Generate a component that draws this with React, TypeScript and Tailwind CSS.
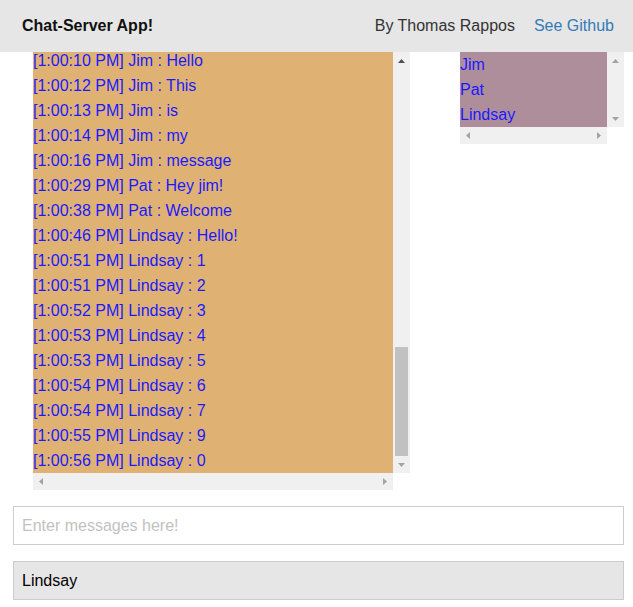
import React from "react";

const messages = [
  ["1:00:10 PM", "Jim", "Hello"],
  ["1:00:12 PM", "Jim", "This"],
  ["1:00:13 PM", "Jim", "is"],
  ["1:00:14 PM", "Jim", "my"],
  ["1:00:16 PM", "Jim", "message"],
  ["1:00:29 PM", "Pat", "Hey jim!"],
  ["1:00:38 PM", "Pat", "Welcome"],
  ["1:00:46 PM", "Lindsay", "Hello!"],
  ["1:00:51 PM", "Lindsay", "1"],
  ["1:00:51 PM", "Lindsay", "2"],
  ["1:00:52 PM", "Lindsay", "3"],
  ["1:00:53 PM", "Lindsay", "4"],
  ["1:00:53 PM", "Lindsay", "5"],
  ["1:00:54 PM", "Lindsay", "6"],
  ["1:00:54 PM", "Lindsay", "7"],
  ["1:00:55 PM", "Lindsay", "9"],
  ["1:00:56 PM", "Lindsay", "0"],
];

const users = ["Jim", "Pat", "Lindsay"];

type Dir = "up" | "down" | "left" | "right";

// little scrollbar arrow triangles
function Arrow({ dir, dark }: { dir: Dir; dark?: boolean }) {
  const fill = dark ? "#505050" : "#a3a3a3";
  const vertical = dir === "up" || dir === "down";
  const points =
    dir === "up" ? "0,4 7,4 3.5,0" : dir === "down" ? "0,0 7,0 3.5,4" : dir === "left" ? "4,0 4,7 0,3.5" : "0,0 0,7 4,3.5";
  return (
    <svg width={vertical ? 7 : 4} height={vertical ? 4 : 7} viewBox={vertical ? "0 0 7 4" : "0 0 4 7"}>
      <polygon points={points} fill={fill} />
    </svg>
  );
}

function VScroll({ upDark, thumb }: { upDark?: boolean; thumb?: boolean }) {
  return (
    <div className="flex h-full w-[17px] flex-col bg-[#f0f0f0]">
      <div className="flex h-[17px] items-center justify-center">
        <Arrow dir="up" dark={upDark} />
      </div>
      <div className="flex flex-1 flex-col justify-end px-[2px]">
        {thumb && <div className="h-[109px] bg-[#c1c1c1]" />}
      </div>
      <div className="flex h-[17px] items-center justify-center">
        <Arrow dir="down" />
      </div>
    </div>
  );
}

function HScroll() {
  return (
    <div className="flex h-[17px] items-center justify-between bg-[#f0f0f0] px-[6px]">
      <Arrow dir="left" />
      <Arrow dir="right" />
    </div>
  );
}

export default function App() {
  return (
    <div className="h-[607px] w-[633px] overflow-hidden bg-white font-['Liberation_Sans',Arial,sans-serif] text-[16px]">
      {/* Navbar */}
      <div className="flex h-[52px] items-center justify-between bg-[#e6e6e6] pl-[22px] pr-[19px]">
        <span className="font-bold text-[#111]">Chat-Server App!</span>
        <div className="flex gap-[19px]">
          <span className="text-[#333]">By Thomas Rappos</span>
          <span className="text-[#337ab7]">See Github</span>
        </div>
      </div>

      <div className="flex pl-[33px]">
        {/* Chat log */}
        <div className="w-[377px]">
          <div className="flex h-[421px]">
            <div className="flex w-[360px] flex-col justify-end overflow-hidden bg-[#dfb274] text-[#1a1aff]">
              {messages.map(([t, who, msg], i) => (
                <div key={i} className="h-[25px] shrink-0 whitespace-nowrap leading-[25px]">
                  [{t}] {who} : {msg}
                </div>
              ))}
            </div>
            <VScroll upDark thumb />
          </div>
          <div className="w-[360px]">
            <HScroll />
          </div>
        </div>

        {/* Users */}
        <div className="ml-[50px] w-[164px]">
          <div className="flex h-[75px]">
            <div className="w-[147px] bg-[#af8e9c] text-[#1a1aff]">
              {users.map((u) => (
                <div key={u} className="h-[25px] leading-[25px]">
                  {u}
                </div>
              ))}
            </div>
            <VScroll />
          </div>
          <div className="w-[147px]">
            <HScroll />
          </div>
        </div>
      </div>

      {/* Inputs */}
      <div className="flex flex-col gap-[16px] px-[13px] pr-[9px] pt-[16px]">
        <input
          placeholder="Enter messages here!"
          className="h-[39px] w-full border border-[#cccccc] bg-white px-[8px] text-[16px] text-black outline-none placeholder:text-[#c2c2c2]"
        />
        <div className="flex h-[39px] items-center border border-[#cccccc] bg-[#e6e6e6] px-[8px] text-black">
          Lindsay
        </div>
      </div>
    </div>
  );
}
